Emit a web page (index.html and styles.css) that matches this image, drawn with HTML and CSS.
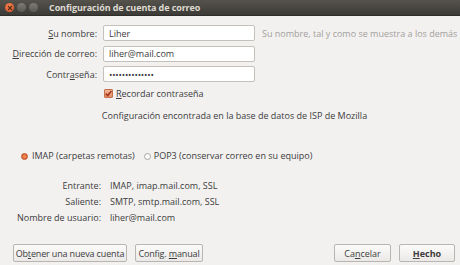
FILE: index.html
```html
<!DOCTYPE html>
<html lang="es">
<head>
    <meta charset="UTF-8">
    <title>Configuración de cuenta de correo</title>
    <link rel="stylesheet" href="styles.css">
</head>
<body>
<div class="window">
    <!-- barra de título -->
    <header class="titlebar">
        <span class="wbtn close">
            <svg width="6" height="6" viewBox="0 0 6 6"><path d="M1 1L5 5M5 1L1 5" stroke="#5a2a10" stroke-width="1.2"/></svg>
        </span>
        <span class="wbtn"></span>
        <span class="wbtn"></span>
        <span class="title">Configuración de cuenta de correo</span>
    </header>

    <div class="content">
        <div class="row">
            <label class="lbl"><u>S</u>u nombre:</label>
            <input class="field" type="text" value="Liher">
            <span class="hint">Su nombre, tal y como se muestra a los demás</span>
        </div>
        <div class="row">
            <label class="lbl"><u>D</u>irección de correo:</label>
            <input class="field" type="text" value="liher@mail.com">
        </div>
        <div class="row">
            <label class="lbl">Contr<u>a</u>seña:</label>
            <input class="field pass" type="password" value="liherpassword1">
        </div>
        <div class="row check-row">
            <span class="checkbox">
                <svg width="9" height="9" viewBox="0 0 9 9"><path d="M1.8 4.6L3.8 6.6L7.4 2" fill="none" stroke="#a8361c" stroke-width="1.6"/></svg>
            </span>
            <span><u>R</u>ecordar contraseña</span>
        </div>

        <p class="found">Configuración encontrada en la base de datos de ISP de Mozilla</p>

        <div class="protocols">
            <span class="radio on"></span><span>IMAP (carpetas remotas)</span>
            <span class="radio off"></span><span>POP3 (conservar correo en su equipo)</span>
        </div>

        <div class="summary">
            <div class="srow"><span class="slbl">Entrante:</span><span>IMAP, imap.mail.com, SSL</span></div>
            <div class="srow"><span class="slbl">Saliente:</span><span>SMTP, smtp.mail.com, SSL</span></div>
            <div class="srow"><span class="slbl">Nombre de usuario:</span><span>liher@mail.com</span></div>
        </div>

        <div class="buttons">
            <button class="btn new">Ob<u>t</u>ener una nueva cuenta</button>
            <button class="btn manual">Config. <u>m</u>anual</button>
            <span class="spacer"></span>
            <button class="btn cancel">Ca<u>n</u>celar</button>
            <button class="btn done"><u>H</u>echo</button>
        </div>
    </div>
</div>
</body>
</html>
```

FILE: styles.css
```css
* { margin: 0; padding: 0; box-sizing: border-box; }
body { width: 460px; height: 265px; overflow: hidden; background: #f2f1f0; font-family: "Open Sans", "Noto Sans", sans-serif; font-size: 9px; color: #3c3c3c; white-space: nowrap; }
u { text-decoration: underline; text-underline-offset: 1px; }

.window { width: 460px; height: 265px; display: flex; flex-direction: column; }

.titlebar { height: 16px; flex-shrink: 0; display: flex; align-items: center; padding-left: 2px; background: linear-gradient(#55524c, #3c3b37); border-bottom: 1px solid #2e2d2a; }
.wbtn { width: 9px; height: 9px; border-radius: 50%; margin-left: 3px; background: linear-gradient(#7d7a74, #5b5953); display: flex; align-items: center; justify-content: center; }
.wbtn.close { background: radial-gradient(circle at 50% 40%, #f58a5c, #d8501f); }
.title { margin-left: 11px; color: #dfdbd2; font-weight: bold; font-size: 9px; letter-spacing: -0.1px; }

.content { flex: 1; display: flex; flex-direction: column; padding: 9px 5px 3px 0; }

.row { display: flex; align-items: center; height: 16px; margin-bottom: 4.5px; }
.lbl { width: 103px; flex-shrink: 0; text-align: right; padding-right: 6px; }
.field { width: 152px; height: 16px; flex-shrink: 0; border: 1px solid #c4c0bb; border-radius: 2px; background: #fff; padding: 0 5px; font: inherit; color: #3c3c3c; outline: none; }
.field.pass { letter-spacing: -0.2px; font-size: 9px; }
.hint { margin-left: 7px; color: #a3a09c; }

.check-row { padding-left: 104px; height: 12px; margin-top: 1px; }
.checkbox { width: 9px; height: 9px; margin-right: 3px; border-radius: 1px; background: linear-gradient(#f0b898, #e08c66); border: 1px solid #c5704a; display: flex; align-items: center; justify-content: center; }
.checkbox svg { margin: -1px; }

.found { text-align: center; margin-top: 6px; padding-left: 14px; line-height: 12px; }

.protocols { display: flex; align-items: center; margin-top: 28px; padding-left: 21px; line-height: 12px; }
.radio { width: 7px; height: 7px; border-radius: 50%; margin-right: 4px; }
.radio.on { background: radial-gradient(circle, #f08457 35%, #dd5a2c 80%); border: 1px solid #c0501f; }
.radio.off { border: 1px solid #a9a6a1; background: #fbfbfa; margin-left: 9px; margin-right: 3px; }

.summary { margin-top: 18px; display: flex; flex-direction: column; gap: 4px; line-height: 12px; }
.srow { display: flex; }
.slbl { width: 110px; text-align: right; padding-right: 9px; }

.buttons { margin-top: auto; display: flex; gap: 8px; padding-left: 13px; }
.spacer { flex: 1; }
.btn { height: 18px; padding: 0; border: 1px solid #b9b5b0; border-radius: 2px; background: linear-gradient(#fbfbfa, #ebe9e7); font: inherit; color: #3c3c3c; }
.new { width: 114px; letter-spacing: -0.15px; }
.manual { width: 68px; letter-spacing: -0.15px; }
.cancel { width: 57px; }
.done { width: 56px; font-weight: bold; }
```
